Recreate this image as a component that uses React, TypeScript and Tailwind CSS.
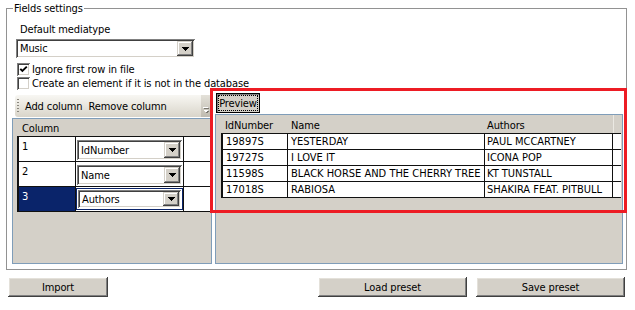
import React from "react";

const FONT =
  "font-['DejaVu_Sans_Condensed','DejaVu_Sans',sans-serif] [font-stretch:condensed]";

const SUNKEN =
  "shadow-[inset_1px_1px_0_#808080,inset_-1px_-1px_0_#ffffff,inset_2px_2px_0_#404040,inset_-2px_-2px_0_#d4d0c8]";
const RAISED =
  "shadow-[inset_-1px_-1px_0_#404040,inset_1px_1px_0_#d4d0c8,inset_-2px_-2px_0_#808080,inset_2px_2px_0_#ffffff]";
const BUTTON =
  "shadow-[inset_-1px_-1px_0_#404040,inset_1px_1px_0_#ffffff,inset_-2px_-2px_0_#808080,inset_2px_2px_0_#e4e1da]";

function DropArrow() {
  return (
    <svg width="7" height="4" viewBox="0 0 7 4" shapeRendering="crispEdges">
      <path d="M0 0H7L3.5 4Z" fill="#000" />
    </svg>
  );
}

function DropButton() {
  return (
    <div className={`w-[16px] h-full bg-[#d4d0c8] flex items-center justify-center ${RAISED}`}>
      <DropArrow />
    </div>
  );
}

function Combo({ value, className }: { value: string; className: string }) {
  return (
    <div className={`flex bg-white p-[2px] ${SUNKEN} ${className}`}>
      <div className="flex-1 flex items-center pl-[2px]">{value}</div>
      <DropButton />
    </div>
  );
}

function CheckBox({ checked, label }: { checked: boolean; label: string }) {
  return (
    <div className="flex items-center h-[13px] ml-[10px] gap-[2px]">
      <div className={`w-[13px] h-[13px] bg-white relative ${SUNKEN}`}>
        {checked && (
          <svg className="absolute left-0 top-0" width="13" height="13" viewBox="0 0 13 13">
            <path d="M3.3 5.8 L5.4 8 L9.8 3.6" stroke="#000" strokeWidth="1.9" fill="none" />
          </svg>
        )}
      </div>
      <span>{label}</span>
    </div>
  );
}

const previewRows = [
  ["19897S", "YESTERDAY", "PAUL MCCARTNEY"],
  ["19727S", "I LOVE IT", "ICONA POP"],
  ["11598S", "BLACK HORSE AND THE CHERRY TREE", "KT TUNSTALL"],
  ["17018S", "RABIOSA", "SHAKIRA FEAT. PITBULL"],
];

const columnRows = ["IdNumber", "Name", "Authors"];

export default function App() {
  return (
    <div className={`relative w-[635px] h-[310px] bg-white text-[11px] leading-[13px] tracking-[-0.12px] text-black pt-[8px] ${FONT}`}>
      {/* Group box */}
      <div className="relative ml-[6px] w-[621px] h-[262px] border border-[#929292]">
        <span className="absolute left-[6px] top-[-7px] bg-white px-[1px]">Fields settings</span>

        <div className="pl-[13px] pt-[14px]">Default mediatype</div>
        <Combo value="Music" className="ml-[9px] mt-[3px] w-[179px] h-[19px]" />

        <div className="mt-[5px] flex flex-col gap-[1px]">
          <CheckBox checked label="Ignore first row in file" />
          <CheckBox checked={false} label="Create an element if it is not in the database" />
        </div>

        <div className="flex mt-[1px] pl-[5px] gap-[3px]">
          {/* Left column */}
          <div className="w-[200px] pt-[4px]">
            <div className="ml-[3px] w-[197px] h-[22px] rounded-[3px] bg-gradient-to-b from-[#f8f7f3] to-[#d9d5ca] flex items-center">
              <div className="ml-[2px] w-[2px] h-[14px] [background-image:repeating-linear-gradient(to_bottom,#8a877e_0px,#8a877e_1px,transparent_1px,transparent_3px)]" />
              <span className="ml-[6px]">Add column</span>
              <span className="ml-[6px]">Remove column</span>
              <div className="ml-auto h-full w-[11px] rounded-r-[3px] bg-gradient-to-b from-[#e4e1d9] to-[#bfbbb0] flex items-end justify-center pb-[3px]">
                <svg width="7" height="7" viewBox="0 0 7 7" shapeRendering="crispEdges">
                  <rect x="1" y="1" width="5" height="1" fill="#7a776f" />
                  <path d="M1 4H6L3.5 6.5Z" fill="#7a776f" />
                  <rect x="0" y="0" width="5" height="1" fill="#ffffff" />
                  <path d="M0 3H5L2.5 5.5Z" fill="#ffffff" />
                </svg>
              </div>
            </div>

            <div className="mt-[1px] w-[200px] h-[146px] border border-[#7f9db9] bg-[#d4d0c8]">
              <div className="h-[17px] pl-[9px] pt-[3px]">Column</div>
              <div className="ml-[4px] border-t border-l-2 border-[#111]">
                {columnRows.map((name, i) => {
                  const selected = i === 2;
                  return (
                    <div key={name} className="flex h-[25px] border-b border-[#111] bg-white">
                      <div
                        className={`w-[57px] border-r border-[#111] pl-[3px] pt-[3px] ${
                          selected ? "bg-[#0a246a] text-white" : ""
                        }`}
                      >
                        {i + 1}
                      </div>
                      <div className="w-[108px] border-r border-[#111]">
                        {selected ? (
                          <div className="mt-[1px] w-[107px] h-[22px] border border-[#0a246a] p-[1px]">
                            <Combo value={name} className="w-full h-full" />
                          </div>
                        ) : (
                          <Combo value={name} className="ml-[1px] mt-[3px] w-[105px] h-[20px]" />
                        )}
                      </div>
                      <div className="flex-1" />
                    </div>
                  );
                })}
              </div>
            </div>
          </div>

          {/* Right column */}
          <div className="w-[408px]">
            <div className="mt-[2px] ml-[1px] w-[44px] h-[20px] bg-[#d4d0c8] border border-black shadow-[inset_1px_1px_0_#808080] flex p-[1px]">
              <div className="flex-1 border border-dotted border-black flex items-center justify-center">
                Preview
              </div>
            </div>

            <div className="mt-[1px] w-[408px] h-[150px] border border-[#7f9db9] bg-[#d4d0c8]">
              <div className="flex h-[18px] pl-[5px]">
                <div className="w-[67px] pl-[4px] pt-[4px]">IdNumber</div>
                <div className="w-[197px] pl-[3px] pt-[4px]">Name</div>
                <div className="w-[128px] pl-[2px] pt-[4px]">Authors</div>
                <div className="w-[8px] border-l border-[#ebe9e3]" />
              </div>
              <div className="ml-[5px] w-[400px] border-t border-l-2 border-[#111] tracking-normal">
                {previewRows.map((r) => (
                  <div key={r[0]} className="flex h-[16px] border-b border-[#111] bg-white">
                    <div className="w-[65px] border-r border-[#111] pl-[3px] flex items-center">{r[0]}</div>
                    <div className="w-[197px] border-r border-[#111] pl-[3px] flex items-center">{r[1]}</div>
                    <div className="w-[128px] border-r border-[#111] pl-[2px] flex items-center">{r[2]}</div>
                    <div className="w-[8px]" />
                  </div>
                ))}
              </div>
            </div>
          </div>
        </div>
      </div>

      {/* Bottom buttons */}
      <div className="mt-[7px] flex justify-between pl-[8px] pr-[10px]">
        <div className={`w-[100px] h-[20px] bg-[#d4d0c8] flex items-center justify-center ${BUTTON}`}>Import</div>
        <div className="flex gap-[9px]">
          <div className={`w-[149px] h-[20px] bg-[#d4d0c8] flex items-center justify-center ${BUTTON}`}>
            Load preset
          </div>
          <div className={`w-[149px] h-[20px] bg-[#d4d0c8] flex items-center justify-center ${BUTTON}`}>
            Save preset
          </div>
        </div>
      </div>

      {/* Red annotation rectangle */}
      <div className="absolute left-[210px] top-[88px] w-[417px] h-[125px] border-[3px] border-[#ed1c24] pointer-events-none" />
    </div>
  );
}
